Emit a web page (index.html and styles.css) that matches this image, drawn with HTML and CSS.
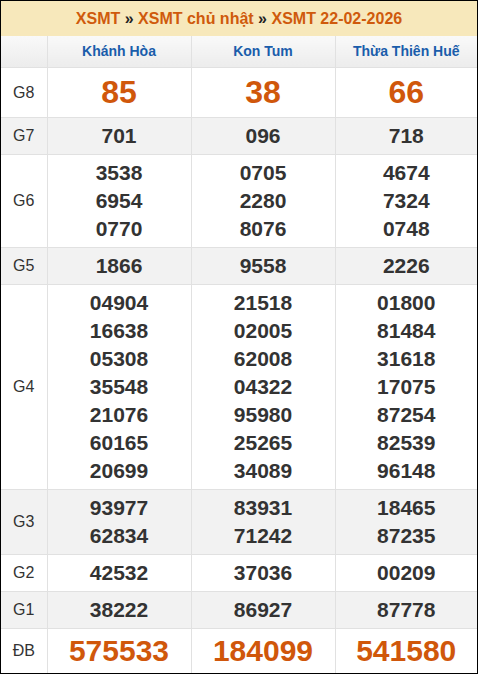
FILE: index.html
```html
<!DOCTYPE html>
<html lang="vi">
<head>
<meta charset="utf-8">
<title>XSMT 22-02-2026</title>
<link rel="stylesheet" href="styles.css">
</head>
<body>
<div class="box">
  <div class="title">
    <a class="crumb">XSMT</a> <span class="sep">»</span> <a class="crumb">XSMT chủ nhật</a> <span class="sep">»</span> <a class="crumb">XSMT 22-02-2026</a>
  </div>
  <table class="kq">
    <colgroup>
      <col class="c-label">
      <col class="c-prov">
      <col class="c-prov">
      <col class="c-prov-last">
    </colgroup>
    <thead>
      <tr class="head">
        <th></th>
        <th>Khánh Hòa</th>
        <th>Kon Tum</th>
        <th>Thừa Thiên Huế</th>
      </tr>
    </thead>
    <tbody>
      <tr class="g8">
        <td class="lbl">G8</td>
        <td><div class="big">85</div></td>
        <td><div class="big">38</div></td>
        <td><div class="big">66</div></td>
      </tr>
      <tr class="alt">
        <td class="lbl">G7</td>
        <td><div>701</div></td>
        <td><div>096</div></td>
        <td><div>718</div></td>
      </tr>
      <tr>
        <td class="lbl">G6</td>
        <td><div>3538</div><div>6954</div><div>0770</div></td>
        <td><div>0705</div><div>2280</div><div>8076</div></td>
        <td><div>4674</div><div>7324</div><div>0748</div></td>
      </tr>
      <tr class="alt">
        <td class="lbl">G5</td>
        <td><div>1866</div></td>
        <td><div>9558</div></td>
        <td><div>2226</div></td>
      </tr>
      <tr>
        <td class="lbl">G4</td>
        <td><div>04904</div><div>16638</div><div>05308</div><div>35548</div><div>21076</div><div>60165</div><div>20699</div></td>
        <td><div>21518</div><div>02005</div><div>62008</div><div>04322</div><div>95980</div><div>25265</div><div>34089</div></td>
        <td><div>01800</div><div>81484</div><div>31618</div><div>17075</div><div>87254</div><div>82539</div><div>96148</div></td>
      </tr>
      <tr class="alt">
        <td class="lbl">G3</td>
        <td><div>93977</div><div>62834</div></td>
        <td><div>83931</div><div>71242</div></td>
        <td><div>18465</div><div>87235</div></td>
      </tr>
      <tr>
        <td class="lbl">G2</td>
        <td><div>42532</div></td>
        <td><div>37036</div></td>
        <td><div>00209</div></td>
      </tr>
      <tr class="alt">
        <td class="lbl">G1</td>
        <td><div>38222</div></td>
        <td><div>86927</div></td>
        <td><div>87778</div></td>
      </tr>
      <tr class="db">
        <td class="lbl">ĐB</td>
        <td><div class="big db-num">575533</div></td>
        <td><div class="big db-num">184099</div></td>
        <td><div class="big db-num">541580</div></td>
      </tr>
    </tbody>
  </table>
</div>
</body>
</html>
```

FILE: styles.css
```css
* { box-sizing: border-box; }
html, body {
  margin: 0;
  padding: 0;
  background: #fff;
}
body {
  font-family: "Liberation Sans", Arial, sans-serif;
  color: #333;
}
.box {
  width: 478px;
  height: 674px;
  border: 1px solid #000;
  overflow: hidden;
}
.title {
  height: 35px;
  background: #f7e8bb;
  text-align: center;
  font-size: 16px;
  font-weight: bold;
  line-height: 35px;
  white-space: nowrap;
}
.crumb {
  color: #cf5a0c;
  text-decoration: none;
}
.sep {
  color: #222;
}
.kq {
  width: 476px;
  border-collapse: collapse;
  border-style: hidden;
  table-layout: fixed;
}
.c-label { width: 46px; }
.c-prov { width: 144px; }
.c-prov-last { width: 142px; }
.kq th,
.kq td {
  border: 1px solid #e1e1e1;
  padding: 0;
  text-align: center;
}
.head th {
  height: 31px;
  background: linear-gradient(#f9f9f9, #ececec);
  color: #1a5dab;
  font-size: 14px;
  font-weight: bold;
  border-top: none;
}
.kq td {
  padding: 4px 0;
  font-size: 21px;
  font-weight: bold;
  line-height: 28px;
  color: #333;
}
.kq td.lbl {
  font-size: 16px;
  font-weight: normal;
  color: #333;
}
.alt td {
  background: #f2f2f2;
}
.g8 td {
  line-height: 41px;
}
.big {
  color: #d0570b;
  font-size: 32px;
}
.db td {
  line-height: 36px;
}
.db-num {
  font-size: 30px;
}
```
